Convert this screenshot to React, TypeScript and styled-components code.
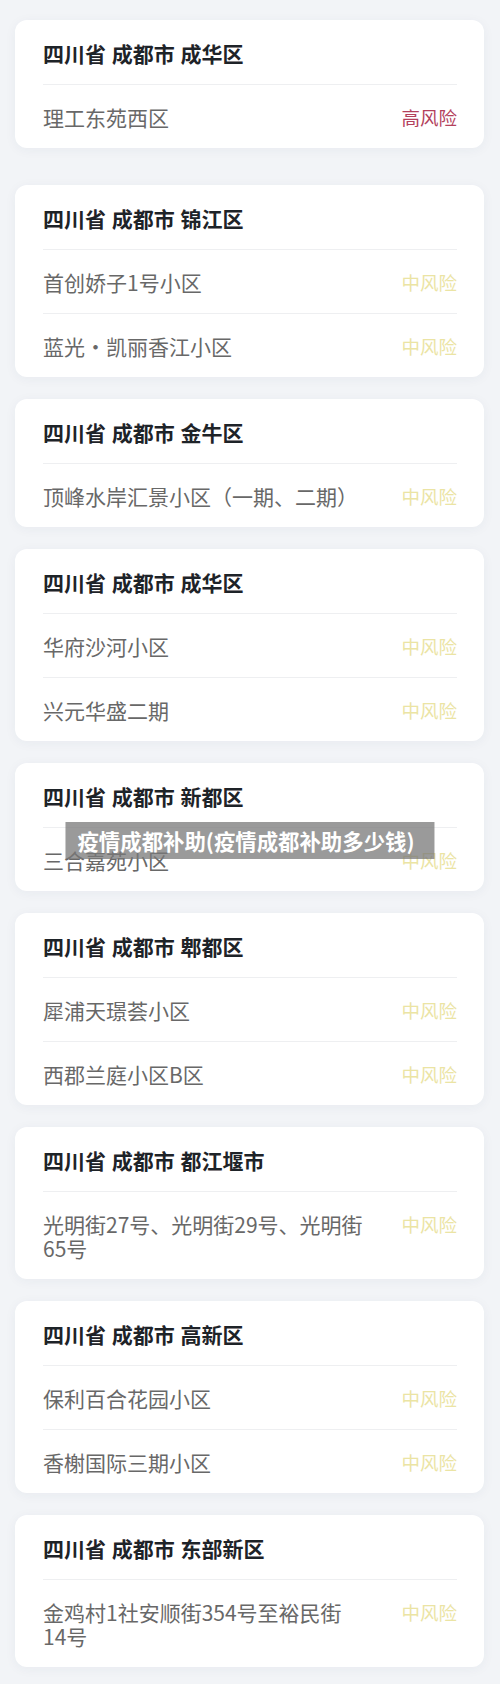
import React from 'react';
import styled, { createGlobalStyle } from 'styled-components';

type Risk = 'high' | 'mid';

interface Area {
  region: string;
  places: { name: string; risk: Risk }[];
}

// \u2060 keeps a house number glued to its 号 when the line wraps
const areas: Area[] = [
  { region: '四川省 成都市 成华区', places: [{ name: '理工东苑西区', risk: 'high' }] },
  {
    region: '四川省 成都市 锦江区',
    places: [
      { name: '首创娇子1号小区', risk: 'mid' },
      { name: '蓝光・凯丽香江小区', risk: 'mid' },
    ],
  },
  { region: '四川省 成都市 金牛区', places: [{ name: '顶峰水岸汇景小区（一期、二期）', risk: 'mid' }] },
  {
    region: '四川省 成都市 成华区',
    places: [
      { name: '华府沙河小区', risk: 'mid' },
      { name: '兴元华盛二期', risk: 'mid' },
    ],
  },
  { region: '四川省 成都市 新都区', places: [{ name: '三合嘉苑小区', risk: 'mid' }] },
  {
    region: '四川省 成都市 郫都区',
    places: [
      { name: '犀浦天璟荟小区', risk: 'mid' },
      { name: '西郡兰庭小区B区', risk: 'mid' },
    ],
  },
  {
    region: '四川省 成都市 都江堰市',
    places: [{ name: '光明街27号、光明街29号、光明街65\u2060号', risk: 'mid' }],
  },
  {
    region: '四川省 成都市 高新区',
    places: [
      { name: '保利百合花园小区', risk: 'mid' },
      { name: '香榭国际三期小区', risk: 'mid' },
    ],
  },
  {
    region: '四川省 成都市 东部新区',
    places: [{ name: '金鸡村1社安顺街354号至裕民街14\u2060号', risk: 'mid' }],
  },
];

const riskLabel: Record<Risk, string> = { high: '高风险', mid: '中风险' };

const App: React.FC = () => (
  <Page>
    <GlobalStyle />
    <List>
      {areas.map((area, i) => (
        <Card key={i}>
          <Region>{area.region}</Region>
          {area.places.map((p) => (
            <Row key={p.name}>
              <Place>{p.name}</Place>
              <RiskTag $risk={p.risk}>{riskLabel[p.risk]}</RiskTag>
            </Row>
          ))}
        </Card>
      ))}
    </List>
    <Caption>疫情成都补助(疫情成都补助多少钱)</Caption>
  </Page>
);

export default App;

const GlobalStyle = createGlobalStyle`
  body {
    margin: 0;
    background: #f2f4f7;
    font-family: 'Noto Sans CJK SC', 'Noto Sans', sans-serif;
  }
`;

const Page = styled.div`
  position: relative;
  min-height: 1684px;
  background: #f2f4f7;
`;

const List = styled.div`
  display: flex;
  flex-direction: column;
  gap: 22px;
  padding: 20px 16px 20px 15px;
`;

const Card = styled.div`
  background: #ffffff;
  border-radius: 12px;
  box-shadow: 0 2px 12px rgba(40, 60, 90, 0.05);
  padding: 0 27px 0 28px;

  &:first-child {
    margin-bottom: 15px;
  }
`;

const Region = styled.h2`
  margin: 0;
  height: 64px;
  display: flex;
  align-items: center;
  padding-top: 2px;
  box-sizing: border-box;
  font-size: 21px;
  word-spacing: 1px;
  font-weight: 700;
  color: #1e2328;
`;

const Row = styled.div`
  display: flex;
  align-items: flex-start;
  justify-content: space-between;
  gap: 30px;
  border-top: 1px solid #eeeff1;
  padding: 20px 0 19px;
`;

const Place = styled.span`
  flex: 1;
  font-size: 21px;
  line-height: 24px;
  color: #686868;
`;

const RiskTag = styled.span<{ $risk: Risk }>`
  flex-shrink: 0;
  font-size: 18.5px;
  line-height: 24px;
  color: ${(p) => (p.$risk === 'high' ? '#b3415c' : '#ebe4a4')};
`;

const Caption = styled.div`
  position: absolute;
  top: 822px;
  left: 50%;
  transform: translateX(-50%);
  height: 37px;
  display: flex;
  align-items: center;
  padding: 0 20px 0 12px;
  white-space: nowrap;
  background: rgba(120, 120, 120, 0.75);
  color: #ffffff;
  font-size: 21.4px;
  font-weight: 700;
`;
